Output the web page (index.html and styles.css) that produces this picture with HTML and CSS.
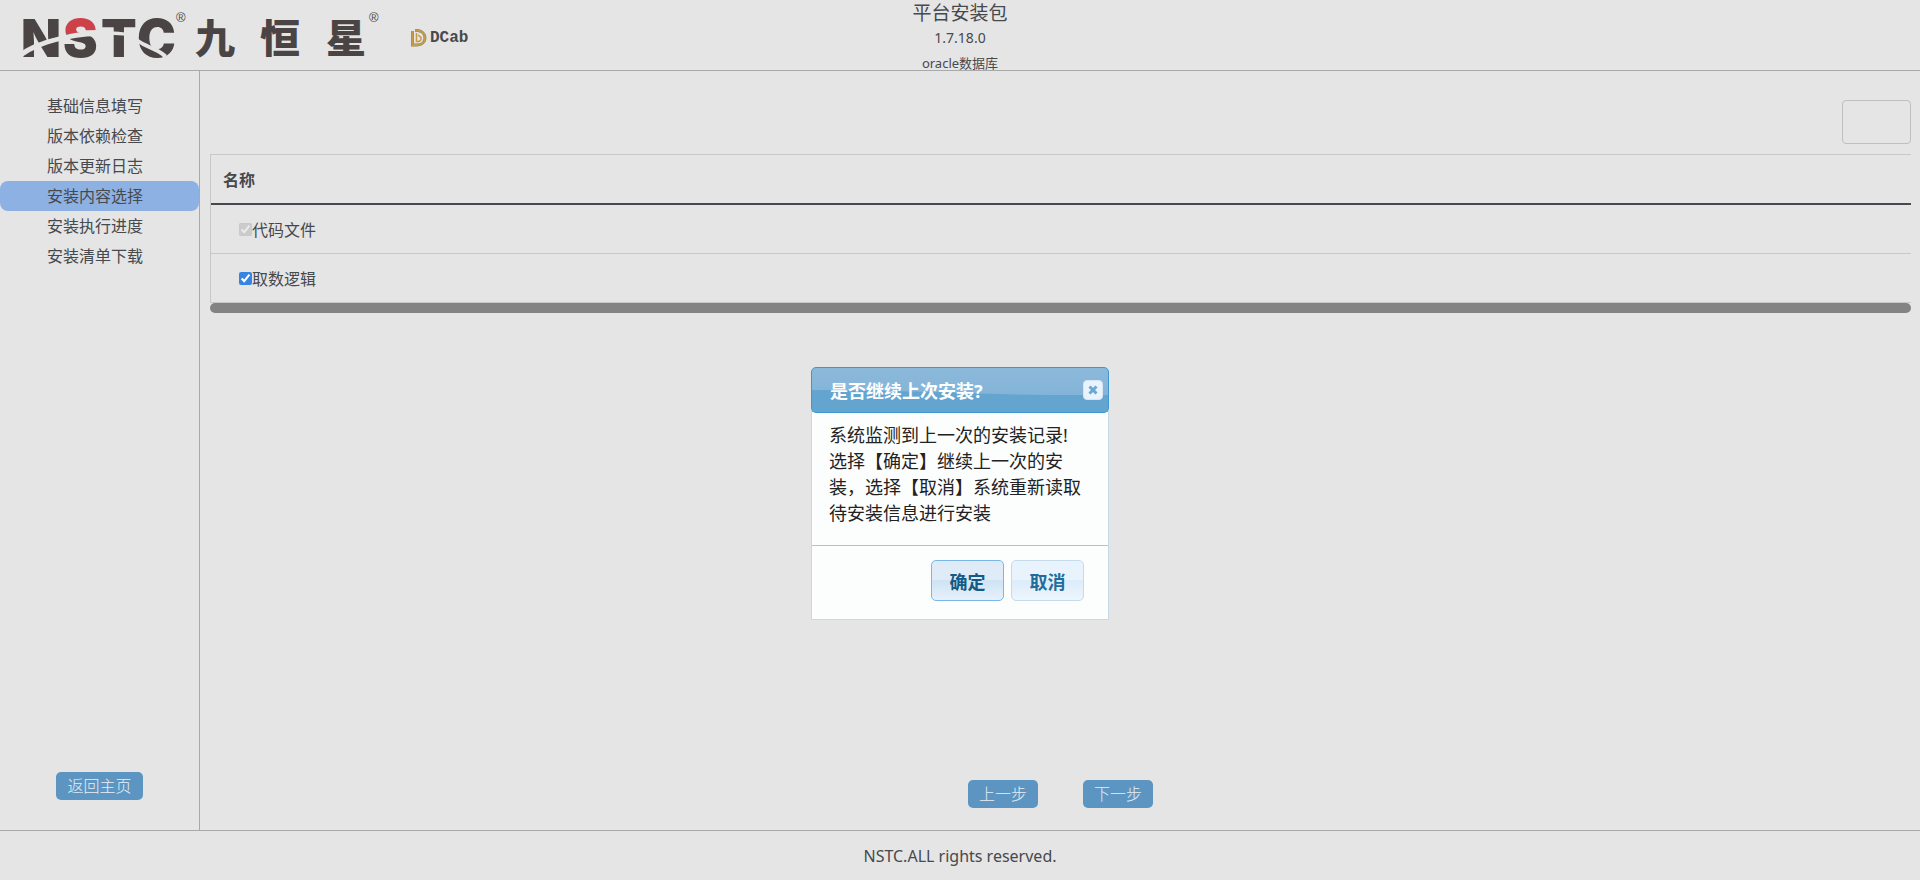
FILE: index.html
```html
<!DOCTYPE html>
<html lang="zh-CN">
<head>
<meta charset="utf-8">
<title>平台安装包</title>
<link rel="stylesheet" href="styles.css">
</head>
<body>
<div class="page">
  <header class="header">
    <div class="brand">
      <svg class="brand-logo" width="380" height="66" viewBox="0 0 380 66" role="img" aria-label="NSTC 九恒星">
        <defs>
          <linearGradient id="sFill" gradientUnits="userSpaceOnUse" x1="0" y1="18" x2="0" y2="57">
            <stop offset="0.4" stop-color="#cd4149"/>
            <stop offset="0.4" stop-color="#4b4444"/>
          </linearGradient>
        </defs>
        <g class="logo-latin">
          <text x="21" y="57">N</text>
          <text x="63" y="57" fill="url(#sFill)">S</text>
          <text x="101" y="57">T</text>
          <text x="137" y="57">C</text>
        </g>
        <path d="M22 51C40 39 70 33 97 30V36C70 37 42 43 22 57Z" fill="#e5e5e5"/>
        <path d="M100 31C114 31 124 32 135 34V37C124 35 114 35 100 35Z" fill="#e5e5e5"/>
        <path d="M136 37C145 45 157 46 167 55L164 58C156 50 144 49 136 41Z" fill="#e5e5e5"/>
        <g class="logo-cjk">
          <text x="195" y="53">九</text>
          <text x="260" y="53">恒</text>
          <text x="326" y="53">星</text>
        </g>
        <g class="logo-mark">
          <text x="176" y="22">®</text>
          <text x="369" y="22">®</text>
        </g>
      </svg>
      <span class="product">
        <svg width="18" height="20" viewBox="0 0 18 20" fill="none" aria-hidden="true">
          <path d="M2.5 3V17H7C12 17 15 14 15 10C15 6 12 3 8 2.5H5" stroke="#8d8a68" stroke-width="3"/>
          <path d="M2.5 3V17H7C12 17 15 14 15 10C15 6 12 3 8 2.5H5" stroke="#c79a45" stroke-width="2"/>
          <path d="M6.500 5V13.500H8C10 13.500 11.500 12 11 9.500L8 7" stroke="#c79a45" stroke-width="1.5"/>
        </svg>
        <span>DCab</span>
      </span>
    </div>
    <div class="heading">
      <h1>平台安装包</h1>
      <p class="version">1.7.18.0</p>
      <p class="database">oracle数据库</p>
    </div>
  </header>
  <div class="body">
    <nav class="sidebar">
      <ul>
        <li><a href="#base">基础信息填写</a></li>
        <li><a href="#depend">版本依赖检查</a></li>
        <li><a href="#log">版本更新日志</a></li>
        <li class="active"><a href="#content" aria-current="step">安装内容选择</a></li>
        <li><a href="#progress">安装执行进度</a></li>
        <li><a href="#list">安装清单下载</a></li>
      </ul>
      <button class="btn" type="button">返回主页</button>
    </nav>
    <main class="main">
      <div class="toolbar"><button class="blank" type="button" aria-label="操作"></button></div>
      <table class="items">
        <thead><tr><th scope="col">名称</th></tr></thead>
        <tbody>
          <tr><td><label><input type="checkbox" checked disabled>代码文件</label></td></tr>
          <tr><td><label><input type="checkbox" checked>取数逻辑</label></td></tr>
        </tbody>
      </table>
      <div class="scroll"></div>
      <div class="steps">
        <button class="btn" type="button">上一步</button>
        <button class="btn" type="button">下一步</button>
      </div>
    </main>
  </div>
  <footer class="footer">NSTC.ALL rights reserved.</footer>
</div>
<div class="overlay">
  <section class="dialog" role="dialog" aria-labelledby="dialog-title">
    <div class="dialog-title">
      <svg class="gloss" viewBox="0 0 298 44" preserveAspectRatio="none" aria-hidden="true"><path d="M0 22C90 21 180 28 298 27V44H0Z"/></svg>
      <h2 id="dialog-title">是否继续上次安装?</h2>
      <button class="close" type="button" aria-label="关闭">
        <svg width="10" height="10" viewBox="0 0 10 10" aria-hidden="true"><path d="M1.5 1.5L8.5 8.5M8.5 1.5L1.5 8.5"/></svg>
      </button>
    </div>
    <p class="dialog-text">系统监测到上一次的安装记录!<br>选择【确定】继续上一次的安装，选择【取消】系统重新读取待安装信息进行安装</p>
    <div class="dialog-actions">
      <button class="ok" type="button">确定</button>
      <button class="cancel" type="button">取消</button>
    </div>
  </section>
</div>
</body>
</html>
```
FILE: styles.css
```css
* { box-sizing: border-box; }
body {
  margin: 0;
  background: #e5e5e5;
  color: #46494d;
  font-family: "Noto Sans", "Noto Sans CJK SC", sans-serif;
  font-size: 16px;
}
h1, h2, p, ul { margin: 0; padding: 0; font-weight: 400; }
button { font: inherit; margin: 0; }
.page { min-height: 100vh; display: flex; flex-direction: column; }
.header {
  display: grid;
  grid-template-columns: 1fr auto 1fr;
  height: 71px;
  border-bottom: 1px solid #a9a9a9;
}
.brand { display: flex; align-items: flex-start; }
.brand-logo { flex: none; overflow: visible; }
.logo-latin { font: 900 52px Inter, sans-serif; fill: #4b4444; }
.logo-cjk { font: 900 40px "Noto Sans CJK SC", sans-serif; fill: #4b4444; }
.logo-mark { font: 13px "Liberation Sans", sans-serif; fill: #4b4444; }
.product {
  display: flex;
  align-items: center;
  gap: 2px;
  margin: 28px 0 0 30px;
  font: 700 16px/20px "Liberation Mono", monospace;
}
.heading { text-align: center; }
.heading h1 { font-size: 19px; line-height: 26px; }
.version { font-size: 14px; line-height: 24px; }
.database { font-size: 13px; line-height: 26px; }
.body { flex: 1; display: flex; }
.sidebar {
  width: 200px;
  border-right: 1px solid #a9a9a9;
  display: flex;
  flex-direction: column;
  justify-content: space-between;
  align-items: center;
  padding: 20px 0 30px;
}
.sidebar ul { list-style: none; align-self: stretch; }
.sidebar li { border-radius: 8px; padding-right: 9px; }
.sidebar a {
  display: block;
  line-height: 30px;
  text-align: center;
  color: inherit;
  text-decoration: none;
}
.active { background: #8eb1e3; }
.btn {
  border: 0;
  border-radius: 5px;
  background: #5c95c2;
  color: #e8eef4;
  padding: 0 11px;
  line-height: 28px;
  font-weight: 300;
}
.main {
  flex: 1;
  display: flex;
  flex-direction: column;
  padding: 29px 9px 22px 10px;
}
.toolbar { display: flex; justify-content: flex-end; padding-bottom: 10px; }
.blank {
  width: 69px;
  height: 44px;
  background: transparent;
  border: 1px solid #bfbfbf;
  border-radius: 4px;
}
.items {
  width: 100%;
  border-spacing: 0;
  border-top: 1px solid #c8c8c8;
  border-left: 1px solid #c8c8c8;
}
.items th {
  height: 50px;
  padding: 0 12px;
  text-align: left;
  border-bottom: 2px solid #46494d;
}
.items td { height: 49px; padding: 0 28px; border-bottom: 1px solid #c8c8c8; }
.items label { display: flex; align-items: center; }
.items input { width: 13px; height: 13px; margin: 0; accent-color: #3584e4; }
.scroll { height: 10px; border-radius: 5px; background: #838383; }
.steps {
  margin-top: auto;
  display: flex;
  justify-content: center;
  gap: 45px;
}
.footer {
  height: 50px;
  border-top: 1px solid #a9a9a9;
  line-height: 50px;
  text-align: center;
}
.overlay {
  position: fixed;
  inset: 0;
  display: grid;
  place-items: start center;
  padding-top: 367px;
}
.dialog {
  width: 298px;
  background: #fcfdfd;
  border: 1px solid #c5d9e8;
  border-radius: 5px 5px 0 0;
  color: #222;
  font-size: 18px;
}
.dialog-title {
  position: relative;
  display: flex;
  justify-content: space-between;
  align-items: center;
  height: 46px;
  margin: -1px;
  padding: 0 5px 0 18px;
  border: 1px solid #3c97d3;
  border-radius: 5px;
  background: linear-gradient(#8cb9da, #7db1d6);
  color: #fff;
}
.gloss { position: absolute; inset: 0; width: 100%; height: 100%; fill: #64a5d0; }
.dialog-title h2 { position: relative; font-size: 18px; font-weight: 700; }
.close {
  position: relative;
  display: grid;
  place-items: center;
  width: 20px;
  height: 20px;
  padding: 0;
  border: 1px solid #d6e6f3;
  border-radius: 4px;
  background: #e9f3fb;
}
.close path { stroke: #6aa7d2; stroke-width: 3; }
.dialog-text { padding: 10px 17px 19px; line-height: 26px; }
.dialog-actions {
  display: flex;
  justify-content: flex-end;
  gap: 7px;
  border-top: 1px solid #a0c6e0;
  padding: 14px 24px 18px;
}
.dialog-actions button {
  width: 73px;
  height: 41px;
  padding: 0;
  border-radius: 5px;
  font-weight: 700;
}
.ok {
  border: 1px solid #79b7e7;
  background: linear-gradient(#dfebf7 50%, #cfe3f3 50%, #e6f1fa);
  color: #155a87;
}
.cancel {
  border: 1px solid #c5dbec;
  background: linear-gradient(#e9f3fd 50%, #dcecfa 50%, #eef5fd);
  color: #226c9c;
}
```
